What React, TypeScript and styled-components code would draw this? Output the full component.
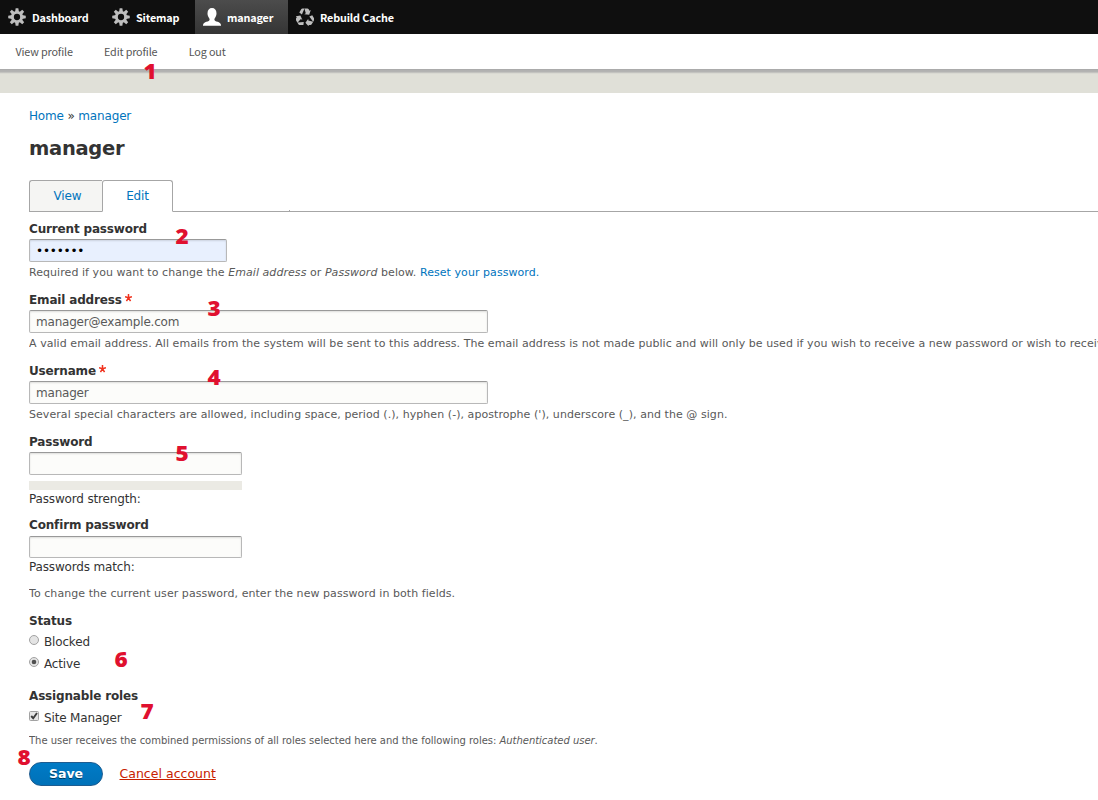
import React from "react";
import styled, { createGlobalStyle, css } from "styled-components";

const GlobalStyle = createGlobalStyle`
  * { box-sizing: border-box; }
  html, body { margin: 0; padding: 0; overflow: hidden; background: #fff; }
  body { font-family: "DejaVu Sans", sans-serif; font-size: 12px; color: #333; }
`;

const Page = styled.div`
  position: relative;
  width: 100%;
  height: 800px;
  overflow: hidden;
`;

const toolbarFont = css`
  font-family: "Noto Sans CJK SC", sans-serif;
  font-size: 10.8px;
  letter-spacing: -0.15px;
`;

const Toolbar = styled.nav`
  ${toolbarFont}
  display: flex;
  height: 34px;
  background: #0f0f0f;
`;

const ToolbarTab = styled.a<{ $width: number; $active?: boolean }>`
  display: flex;
  align-items: center;
  width: ${(p) => p.$width}px;
  height: 34px;
  padding-left: 8px;
  color: #fff;
  font-weight: 700;
  white-space: nowrap;
  background: ${(p) => (p.$active ? "linear-gradient(#4c4c4c, #353535)" : "none")};
  svg { flex: none; margin-right: 6px; }
  span { line-height: 34px; }
`;

const Tray = styled.div`
  ${toolbarFont}
  display: flex;
  gap: 31.3px;
  height: 35px;
  padding: 0 15.4px;
  background: #fff;
  color: #565656;
  line-height: 35px;
  white-space: nowrap;
`;

const HeaderBand = styled.div`
  height: 24px;
  background: linear-gradient(#a6a6a6 0, #b0b0b0 1px, #b4b4b3 3px, #d2d2cc 4px, #e0e0d8 5px);
`;

const Content = styled.main`
  display: flex;
  flex-direction: column;
  align-items: flex-start;
  padding-left: 29px;
  white-space: nowrap;
  letter-spacing: -0.16px;
`;

const Link = styled.a`
  color: #0074bd;
`;

const Breadcrumb = styled.div`
  margin-top: 14px;
  height: 18px;
  line-height: 18px;
`;

const Title = styled.h1`
  margin: 12px 0 0;
  height: 24px;
  line-height: 24px;
  font-size: 19.5px;
  font-weight: 700;
  letter-spacing: -0.3px;
`;

const Tabs = styled.div`
  display: flex;
  width: 100%;
  height: 32px;
  margin-top: 19px;
`;

const Tab = styled.a<{ $active?: boolean }>`
  width: ${(p) => (p.$active ? 71 : 73)}px;
  height: 32px;
  border: 1px solid #a6a6a6;
  border-right-width: ${(p) => (p.$active ? 1 : 0)}px;
  border-bottom-color: ${(p) => (p.$active ? "#fff" : "#a6a6a6")};
  border-radius: ${(p) => (p.$active ? "3px 3px 0 0" : "3px 0 0 0")};
  background: ${(p) => (p.$active ? "#fff" : "#f5f5f3")};
  color: #0074bd;
  line-height: 30px;
  text-align: center;
  padding-left: ${(p) => (p.$active ? 0 : 3)}px;
`;

const TabRule = styled.div`
  flex: 1;
  display: flex;
  align-items: flex-end;
  padding-left: 116px;
  border-bottom: 1px solid #a6a6a6;
  &::before { content: ""; width: 1px; height: 1px; background: #a6a6a6; }
`;

const Label = styled.label<{ $top: number; $gap?: number }>`
  display: flex;
  align-items: center;
  margin-top: ${(p) => p.$top}px;
  height: 18px;
  margin-bottom: ${(p) => p.$gap ?? 1}px;
  line-height: 18px;
  font-weight: 700;
`;

const Required = styled.svg`
  margin: -4px 0 0 3px;
`;

const Input = styled.input<{ $width: number; $filled?: boolean; $height?: number }>`
  width: ${(p) => p.$width}px;
  height: ${(p) => p.$height ?? 23}px;
  padding: 0 6px;
  border: 1px solid #b8b8b8;
  border-top-color: #999;
  border-radius: 2px;
  outline: none;
  background: ${(p) => (p.$filled ? "#e8f0fe" : "#fcfcfa")};
  box-shadow: inset 0 1px 2px rgba(0, 0, 0, 0.125);
  color: ${(p) => (p.$filled ? "#000" : "#595959")};
  font: 12px "DejaVu Sans", sans-serif;
  letter-spacing: -0.2px;
`;

const Description = styled.div<{ $top?: number; $small?: boolean }>`
  margin: ${(p) => p.$top ?? 3}px 0 -1px;
  width: 1069px;
  overflow: hidden;
  height: 16px;
  line-height: 16px;
  font-size: ${(p) => (p.$small ? 10 : 11)}px;
  letter-spacing: ${(p) => (p.$small ? -0.03 : 0.058)}px;
  color: #595959;
`;

const StrengthTrack = styled.div`
  width: 213px;
  height: 9px;
  margin-top: 6px;
  background: #ebeae4;
`;

const Note = styled.div`
  height: 18px;
  line-height: 18px;
`;

const Option = styled.label<{ $top: number }>`
  display: flex;
  align-items: center;
  gap: 5px;
  height: 18px;
  margin-top: ${(p) => p.$top}px;
  svg { flex: none; margin-top: -4px; }
`;

const Actions = styled.div`
  display: flex;
  align-items: center;
  gap: 16.5px;
  height: 24px;
  margin-top: 14px;
`;

const SaveButton = styled.button`
  width: 74px;
  height: 24px;
  padding: 0;
  border: 1px solid #1e5c90;
  border-radius: 12px;
  background: linear-gradient(#007bc6, #0071b8);
  color: #fff;
  font: 700 12.5px/20px "DejaVu Sans", sans-serif;
  text-shadow: 0 1px rgba(0, 0, 0, 0.5);
`;

const DangerLink = styled.a`
  color: #c72100;
  font-size: 12.5px;
  letter-spacing: 0.02px;
  line-height: 24px;
  height: 24px;
  text-decoration: underline;
`;

const Marker = styled.span<{ $x: number; $y: number }>`
  position: absolute;
  left: ${(p) => p.$x}px;
  top: ${(p) => p.$y}px;
  width: 20px;
  height: 20px;
  color: #e0102f;
  font: 800 20.5px/20px "Open Sans", sans-serif;
  text-align: center;
  transform: scaleX(1.1);
`;

const GearIcon = () => (
  <svg width="18" height="18" viewBox="0 0 16 16">
    <g fill="#bebebe">
      {[0, 45, 90, 135, 180, 225, 270, 315].map((a) => (
        <path key={a} transform={`rotate(${a} 8 8)`} d="M6.8 0.2h2.4l0.5 3.4h-3.4z" />
      ))}
    </g>
    <circle cx="8" cy="8" r="4.1" fill="none" stroke="#bebebe" strokeWidth="2.6" />
  </svg>
);

const PersonIcon = () => (
  <svg width="18" height="18" viewBox="0 0 16 16">
    <path
      fill="#fff"
      d="M16 15.2c-.3-1.7-1.5-2.4-3-2.9-1.7-.5-2.9-1-2.9-2.1 0-.6.4-1 .8-1.7.7-1.2 1.1-2.4 1.1-3.9C12 1.8 10.4 0 8 0S4 1.8 4 4.6c0 1.5.4 2.7 1.1 3.9.4.7.8 1.1.8 1.7 0 1.1-1.2 1.6-2.9 2.1-1.5.5-2.7 1.2-3 2.9V15.7h16z"
    />
  </svg>
);

const RecycleIcon = () => (
  <svg width="18" height="18" viewBox="0 0 18 18">
    <g fill="#bebebe">
      {[0, 120, 240].map((a) => (
        <g key={a} transform={`rotate(${a} 9 9.6)`}>
          <path d="M3.3 4.5 5.2 1.3Q5.6.5 6.5.5h2L5.9 6.4z" />
          <path d="M8.4.5h3q.9 0 1.3.8l.8 1.5 1.3-.8-1.6 4.7-4.9-.5 1.500-.9z" />
        </g>
      ))}
    </g>
  </svg>
);

const Asterisk = () => (
  <Required width="7" height="8" viewBox="0 0 6 7">
    <path d="M3 0v3.3M0 2.3 3 3.3 6 2.3M1.2 6.3 3 3.3 4.8 6.3" stroke="#f0321e" strokeWidth="1.3" fill="none" />
  </Required>
);

const Radio = ({ checked }: { checked?: boolean }) => (
  <svg width="10" height="10" viewBox="0 0 10 10">
    <circle cx="5" cy="5" r="4.5" fill="#e4e4e4" stroke="#a2a2a2" />
    {checked && <circle cx="5" cy="5" r="2.3" fill="#505050" />}
  </svg>
);

const Check = () => (
  <svg width="10" height="10" viewBox="0 0 10 10">
    <rect x=".5" y=".5" width="9" height="9" rx="1" fill="#e6e6e6" stroke="#a2a2a2" />
    <path d="M2.2 5 4.2 7.2 8 2" fill="none" stroke="#3c3c3c" strokeWidth="1.9" />
  </svg>
);

const markers = [
  [140, 61], [172, 226], [204, 298], [204, 367], [172, 443], [111, 649], [137, 701], [14, 747],
];

export default function App() {
  return (
    <Page>
      <GlobalStyle />
      <Toolbar>
        <ToolbarTab $width={104}><GearIcon /><span>Dashboard</span></ToolbarTab>
        <ToolbarTab $width={91}><GearIcon /><span>Sitemap</span></ToolbarTab>
        <ToolbarTab $width={93} $active><PersonIcon /><span>manager</span></ToolbarTab>
        <ToolbarTab $width={120}><RecycleIcon /><span>Rebuild Cache</span></ToolbarTab>
      </Toolbar>
      <Tray>
        <span>View profile</span>
        <span>Edit profile</span>
        <span>Log out</span>
      </Tray>
      <HeaderBand />
      <Content>
        <Breadcrumb><Link>Home</Link> » <Link>manager</Link></Breadcrumb>
        <Title>manager</Title>
        <Tabs><Tab>View</Tab><Tab $active>Edit</Tab><TabRule /></Tabs>

        <Label $top={8}>Current password</Label>
        <Input $width={198} $filled type="password" defaultValue="manager" />
        <Description>
          Required if you want to change the <em>Email address</em> or <em>Password</em> below.{" "}
          <Link>Reset your password.</Link>
        </Description>

        <Label $top={11}>Email address<Asterisk /></Label>
        <Input $width={459} defaultValue="manager@example.com" />
        <Description>
          A valid email address. All emails from the system will be sent to this address. The email address is not made
          public and will only be used if you wish to receive a new password or wish to receive
        </Description>

        <Label $top={11}>Username<Asterisk /></Label>
        <Input $width={459} defaultValue="manager" />
        <Description>
          Several special characters are allowed, including space, period (.), hyphen (-), apostrophe ('), underscore
          (_), and the @ sign.
        </Description>

        <Label $top={11}>Password</Label>
        <Input $width={213} type="password" />
        <StrengthTrack />
        <Note>Password strength:</Note>
        <Label $top={8} $gap={2}>Confirm password</Label>
        <Input $width={213} $height={22} type="password" />
        <Note>Passwords match:</Note>
        <Description $top={10}>To change the current user password, enter the new password in both fields.</Description>

        <Label $top={11} $gap={0}>Status</Label>
        <Option $top={3}><Radio />Blocked</Option>
        <Option $top={4}><Radio checked />Active</Option>
        <Label $top={14} $gap={0}>Assignable roles</Label>
        <Option $top={4}><Check />Site Manager</Option>
        <Description $top={6} $small>
          The user receives the combined permissions of all roles selected here and the following roles:{" "}
          <em>Authenticated user</em>.
        </Description>
        <Actions>
          <SaveButton>Save</SaveButton>
          <DangerLink>Cancel account</DangerLink>
        </Actions>
      </Content>
      {markers.map(([x, y], i) => (
        <Marker key={i} $x={x} $y={y}>{i + 1}</Marker>
      ))}
    </Page>
  );
}
